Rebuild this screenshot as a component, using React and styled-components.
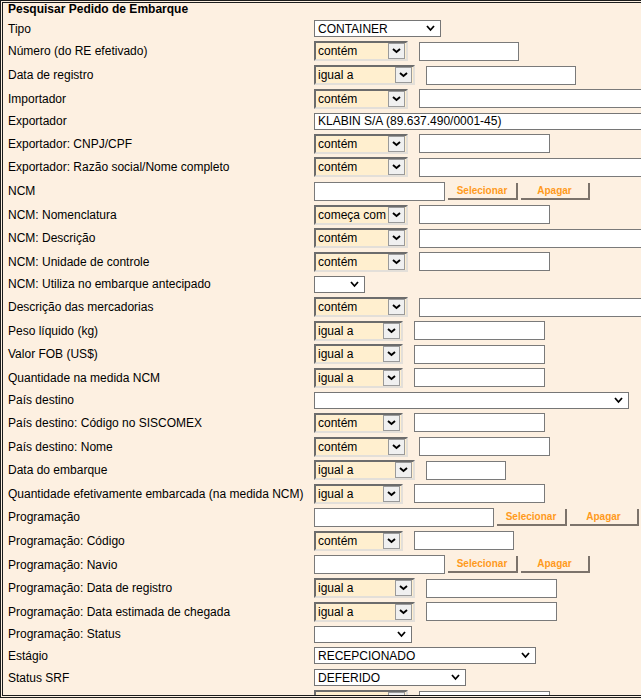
import React from 'react';
import styled, { createGlobalStyle } from 'styled-components';

const GlobalStyle = createGlobalStyle`
    html, body {
        margin: 0;
        padding: 0;
        overflow: hidden;
        background: #fdf0e1;
    }
    body {
        font-family: 'Liberation Sans', Arial, sans-serif;
        font-size: 12px;
        color: #000;
    }
`

const Frame = styled.div`
    width: 760px;
    border: 1px solid #1c1c1c;
    border-right: none;
    padding: 1px 0 1px 1px;
`

const Panel = styled.div`
    height: 692px;
    overflow: hidden;
    border: 1px solid #1c1c1c;
    border-right: none;
    background: #fdf0e1;
`

const Title = styled.div`
    height: 15.1px;
    line-height: 13px;
    padding-left: 5px;
    font-weight: bold;
    font-size: 12px;
`

const Row = styled.div`
    display: grid;
    grid-template-columns: 306px auto;
    align-items: center;
    padding-left: 5px;
    height: ${({ $short }) => $short ? '21.6px' : '23.6px'};
`

const Label = styled.span`
    font-size: 12px;
    white-space: nowrap;
`

const Controls = styled.div`
    display: flex;
    align-items: center;
    gap: ${({ $gap }) => $gap || 11}px;
`

const OpBox = styled.div`
    box-sizing: border-box;
    width: ${({ $w }) => $w}px;
    height: 20px;
    display: flex;
    align-items: center;
    border-top: 2px solid #6c6c6c;
    border-left: 2px solid #6c6c6c;
    border-bottom: 2px solid #e3dfd9;
    border-right: 2px solid #e3dfd9;
    background: #ffefcf;
    flex-shrink: 0;
`

const OpText = styled.span`
    flex: 1;
    padding-left: 2px;
    overflow: hidden;
    white-space: nowrap;
    font-size: 12px;
`

const OpArrow = styled.span`
    box-sizing: border-box;
    width: 17px;
    height: 16px;
    margin-right: 1px;
    display: flex;
    align-items: center;
    justify-content: center;
    background: #f0f0f0;
    border: 1px solid #9a9a9a;
`

const PlainSelect = styled.div`
    box-sizing: border-box;
    width: ${({ $w }) => $w}px;
    height: 17px;
    display: flex;
    align-items: center;
    border: 1px solid #767676;
    background: #fff;
    padding: 0 5px 0 3px;
    flex-shrink: 0;
`

const SelectText = styled.span`
    flex: 1;
    white-space: nowrap;
    overflow: hidden;
    font-size: 12px;
`

const TextBox = styled.input`
    box-sizing: border-box;
    width: ${({ $w }) => $w}px;
    height: 19px;
    margin: 0;
    padding: 0 2px;
    border: 1px solid #7a7a7a;
    background: #fff;
    font-family: inherit;
    font-size: 12px;
    outline: none;
    flex-shrink: 0;
`

const LinkButton = styled.button`
    box-sizing: border-box;
    width: ${({ $w }) => $w}px;
    height: 17px;
    margin: 0;
    padding: 0;
    background: #fdf0e1;
    border: none;
    border-right: 2px solid #7c736b;
    border-bottom: 2px solid #7c736b;
    color: #ff9a1c;
    font-family: 'Liberation Sans', Arial, sans-serif;
    font-weight: bold;
    font-size: 10px;
    cursor: pointer;
    flex-shrink: 0;
`

const Chevron = ({ w = 9, h = 5, sw = 1.8 }) => (
    <svg width={w} height={h + 2} viewBox={`0 0 ${w} ${h + 2}`}>
        <polyline points={`1,1 ${w / 2},${h} ${w - 1},1`} fill="none" stroke="#000" strokeWidth={sw} />
    </svg>
)

// operator select widths: A = contém/começa com, B = igual a (data), C = compact
const OP = { A: 94, B: 101, C: 89 };
const WIDE = 320;

const Operator = ({ text, w }) => (
    <OpBox $w={w}>
        <OpText>{text}</OpText>
        <OpArrow><Chevron w={9} h={4} sw={1.9} /></OpArrow>
    </OpBox>
)

const Select = ({ text, w }) => (
    <PlainSelect $w={w}>
        <SelectText>{text}</SelectText>
        <Chevron />
    </PlainSelect>
)

const fields = [
    { label: 'Tipo', kind: 'select', text: 'CONTAINER', w: 127 },
    { label: 'Número (do RE efetivado)', kind: 'op', op: 'contém', ow: OP.A, iw: 100 },
    { label: 'Data de registro', kind: 'op', op: 'igual a', ow: OP.B, iw: 150 },
    { label: 'Importador', kind: 'op', op: 'contém', ow: OP.A, iw: WIDE },
    { label: 'Exportador', kind: 'select', text: 'KLABIN S/A (89.637.490/0001-45)', w: 420 },
    { label: 'Exportador: CNPJ/CPF', kind: 'op', op: 'contém', ow: OP.A, iw: 131 },
    { label: 'Exportador: Razão social/Nome completo', kind: 'op', op: 'contém', ow: OP.A, iw: WIDE },
    { label: 'NCM', kind: 'lookup', iw: 131, bw: [70, 69] },
    { label: 'NCM: Nomenclatura', kind: 'op', op: 'começa com', ow: OP.A, iw: 131 },
    { label: 'NCM: Descrição', kind: 'op', op: 'contém', ow: OP.A, iw: WIDE },
    { label: 'NCM: Unidade de controle', kind: 'op', op: 'contém', ow: OP.A, iw: 131 },
    { label: 'NCM: Utiliza no embarque antecipado', kind: 'select', text: '', w: 51 },
    { label: 'Descrição das mercadorias', kind: 'op', op: 'contém', ow: OP.A, iw: WIDE },
    { label: 'Peso líquido (kg)', kind: 'op', op: 'igual a', ow: OP.C, iw: 131 },
    { label: 'Valor FOB (US$)', kind: 'op', op: 'igual a', ow: OP.C, iw: 131 },
    { label: 'Quantidade na medida NCM', kind: 'op', op: 'igual a', ow: OP.C, iw: 131 },
    { label: 'País destino', kind: 'select', text: '', w: 315 },
    { label: 'País destino: Código no SISCOMEX', kind: 'op', op: 'contém', ow: OP.C, iw: 131 },
    { label: 'País destino: Nome', kind: 'op', op: 'contém', ow: OP.A, iw: 131 },
    { label: 'Data do embarque', kind: 'op', op: 'igual a', ow: OP.B, iw: 80 },
    { label: 'Quantidade efetivamente embarcada (na medida NCM)', kind: 'op', op: 'igual a', ow: OP.C, iw: 131 },
    { label: 'Programação', kind: 'lookup', iw: 180, bw: [70, 69] },
    { label: 'Programação: Código', kind: 'op', op: 'contém', ow: OP.C, iw: 100 },
    { label: 'Programação: Navio', kind: 'lookup', iw: 131, bw: [70, 69] },
    { label: 'Programação: Data de registro', kind: 'op', op: 'igual a', ow: OP.B, iw: 131 },
    { label: 'Programação: Data estimada de chegada', kind: 'op', op: 'igual a', ow: OP.B, iw: 131 },
    { label: 'Programação: Status', kind: 'select', text: '', w: 98 },
    { label: 'Estágio', kind: 'select', text: 'RECEPCIONADO', w: 222 },
    { label: 'Status SRF', kind: 'select', text: 'DEFERIDO', w: 152 },
    // row scrolled below the panel edge: only the top of its controls shows
    { label: '', kind: 'op', op: '', ow: OP.A, iw: 131 },
];

const Field = ({ f }) => {
    if (f.kind === 'select') {
        return (
            <Row $short>
                <Label>{f.label}</Label>
                <Controls><Select text={f.text} w={f.w} /></Controls>
            </Row>
        )
    }
    if (f.kind === 'lookup') {
        return (
            <Row>
                <Label>{f.label}</Label>
                <Controls $gap={3}>
                    <TextBox type="text" $w={f.iw} />
                    <LinkButton type="button" $w={f.bw[0]}>Selecionar</LinkButton>
                    <LinkButton type="button" $w={f.bw[1]}>Apagar</LinkButton>
                </Controls>
            </Row>
        )
    }
    return (
        <Row>
            <Label>{f.label}</Label>
            <Controls>
                <Operator text={f.op} w={f.ow} />
                <TextBox type="text" $w={f.iw} />
            </Controls>
        </Row>
    )
}

export default function App() {
    return (
        <>
            <GlobalStyle />
            <Frame>
                <Panel>
                    <Title>Pesquisar Pedido de Embarque</Title>
                    {fields.map((f, i) => <Field key={i} f={f} />)}
                </Panel>
            </Frame>
        </>
    )
}
